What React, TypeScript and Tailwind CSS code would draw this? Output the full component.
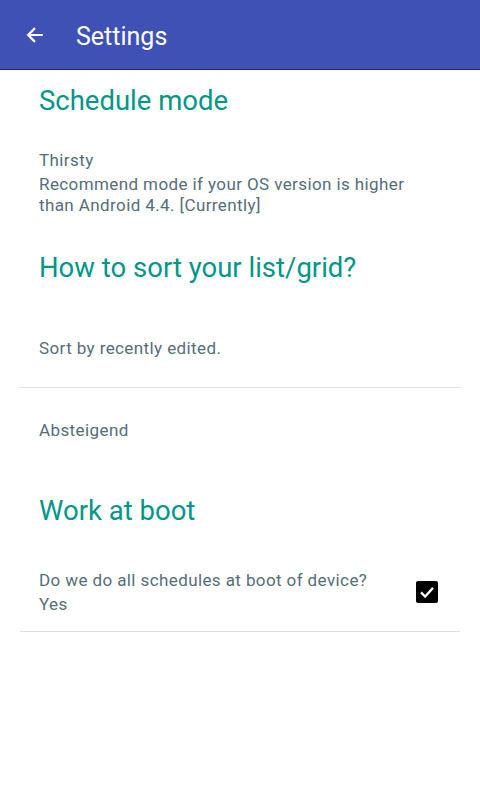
import React from "react";

const Heading = ({ children, className = "" }: { children: React.ReactNode; className?: string }) => (
  <h2 className={`pl-[39px] text-[27.5px] leading-[32px] tracking-normal text-[#009688] ${className}`}>{children}</h2>
);

const Divider = ({ className = "" }: { className?: string }) => (
  <div className={`mx-5 h-px bg-[#e0e0e0] ${className}`} />
);

export default function App() {
  return (
    <div
      className="w-[480px] h-[800px] bg-white overflow-hidden"
      style={{ fontFamily: "Roboto, 'Noto Sans', sans-serif" }}
    >
      {/* Toolbar */}
      <header className="h-[70px] bg-[#3f51b5] border-b border-[#1a237e] flex items-center text-white">
        <button className="ml-[24px] w-[22px] h-[22px] flex items-center justify-center">
          <svg width="22" height="22" viewBox="0 0 24 24" fill="none">
            <path d="M20.5 12H5M12 4.5L4.5 12L12 19.5" stroke="white" strokeWidth="2.4" />
          </svg>
        </button>
        <h1 className="ml-[30px] text-[25px] leading-none pt-[3px]">Settings</h1>
      </header>

      <main className="text-[17px] tracking-[0.4px] text-[#546e7a]">
        <Heading className="pt-[15px]">Schedule mode</Heading>

        <div className="pl-[39px] pr-[50px] mt-[31px]">
          <p className="leading-[24px]">Thirsty</p>
          <p className="mt-[2px] leading-[21px]">Recommend mode if your OS version is higher than Android 4.4. [Currently]</p>
        </div>

        <Heading className="mt-[36px]">How to sort your list/grid?</Heading>

        <p className="pl-[39px] mt-[52px] leading-[24px]">Sort by recently edited.</p>
        <Divider className="mt-[27px]" />
        <p className="pl-[39px] mt-[30px] leading-[24px]">Absteigend</p>

        <Heading className="mt-[53px]">Work at boot</Heading>

        <div className="mt-[41px] pl-[39px] pr-[42px] flex items-center">
          <div className="flex-1">
            <p className="leading-[24px]">Do we do all schedules at boot of device?</p>
            <p className="leading-[24px]">Yes</p>
          </div>
          <div className="w-[22px] h-[22px] rounded-[2px] bg-black flex items-center justify-center">
            <svg width="18" height="18" viewBox="0 0 24 24" fill="none">
              <path d="M4 12.5L9.5 18L20 6.5" stroke="white" strokeWidth="3" />
            </svg>
          </div>
        </div>
        <Divider className="mt-[15px]" />
      </main>
    </div>
  );
}
